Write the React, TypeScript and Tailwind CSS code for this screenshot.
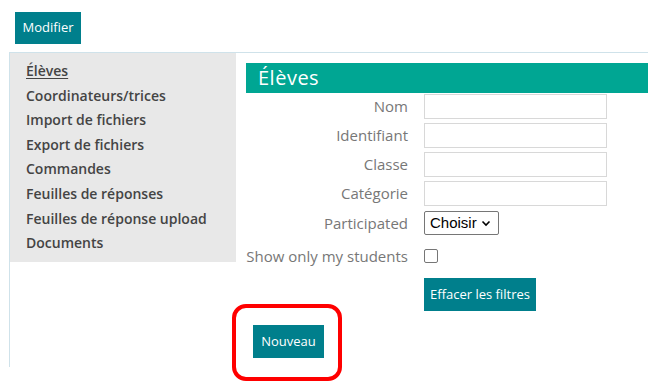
import React from 'react';

const menu = [
  'Élèves',
  'Coordinateurs/trices',
  'Import de fichiers',
  'Export de fichiers',
  'Commandes',
  'Feuilles de réponses',
  'Feuilles de réponse upload',
  'Documents',
];

const fields = ['Nom', 'Identifiant', 'Classe', 'Catégorie'];

const font = { fontFamily: '"Open Sans", "Liberation Sans", sans-serif' };

export default function App() {
  return (
    <div className="relative w-[670px] h-[388px] bg-white overflow-hidden" style={font}>
      <div className="pt-[12px] pl-[15px]">
        <button className="h-[32px] w-[66px] bg-[#007f8c] text-white text-[13px]">Modifier</button>
      </div>

      <div className="mt-[8px] ml-[9px] w-[639px] h-[315px] border-l border-t border-[#cfe2ea] flex">
        {/* sidebar */}
        <div className="w-[226px] h-[209px] bg-[#e8e8e8] pl-[16px] pt-[6px] shrink-0">
          {menu.map((m, i) => (
            <div
              key={m}
              className={`h-[24.6px] leading-[24.6px] text-[14px] font-semibold text-[#444] ${i === 0 ? 'underline underline-offset-2' : ''}`}
            >
              {m}
            </div>
          ))}
        </div>

        {/* main */}
        <div className="flex-1 pl-[10px] pt-[10px]">
          <div className="h-[30px] bg-[#00a693] text-white text-[20px] leading-[30px] pl-[12px] tracking-wide">
            Élèves
          </div>

          <div className="mt-[1px] grid grid-cols-[162px_183px] gap-x-[16px]">
            {fields.map((f) => (
              <React.Fragment key={f}>
                <div className="h-[29px] text-right text-[15px] text-[#777] leading-[25px]">{f}</div>
                <div className="h-[29px]">
                  <div className="h-[25px] border border-[#d8d8d8] bg-white" />
                </div>
              </React.Fragment>
            ))}
            <div className="h-[30px] pt-[1px] text-right text-[15px] text-[#777] leading-[24px]">Participated</div>
            <div className="h-[30px] pt-[1px]">
              <div
                className="h-[24px] w-[75px] border border-[#767676] rounded-[2px] flex items-center pl-[5px] gap-[4px] text-[15px] text-black"
                style={{ fontFamily: '"Liberation Sans", Arial, sans-serif' }}
              >
                Choisir
                <svg width="10" height="7" viewBox="0 0 10 7">
                  <path d="M1.5 1.5 L5 5 L8.5 1.5" fill="none" stroke="#000" strokeWidth="1.6" />
                </svg>
              </div>
            </div>
            <div className="h-[32px] text-right text-[15px] text-[#777] leading-[32px] whitespace-nowrap">Show only my students</div>
            <div className="h-[32px] flex items-center">
              <div className="w-[14px] h-[14px] border border-[#767676] rounded-[2px]" />
            </div>
            <div />
            <div className="pt-[6px]">
              <button className="h-[33px] w-[112px] bg-[#007f8c] text-white text-[13px]">Effacer les filtres</button>
            </div>
          </div>

          <div className="mt-[14px] pl-[7px]">
            <button className="h-[33px] w-[71px] bg-[#007f8c] text-white text-[13px]">Nouveau</button>
          </div>
        </div>
      </div>

      {/* annotation */}
      <div className="absolute left-[232px] top-[304px] w-[110px] h-[77px] border-[4px] border-[#ff0000] rounded-[14px]" />
    </div>
  );
}
